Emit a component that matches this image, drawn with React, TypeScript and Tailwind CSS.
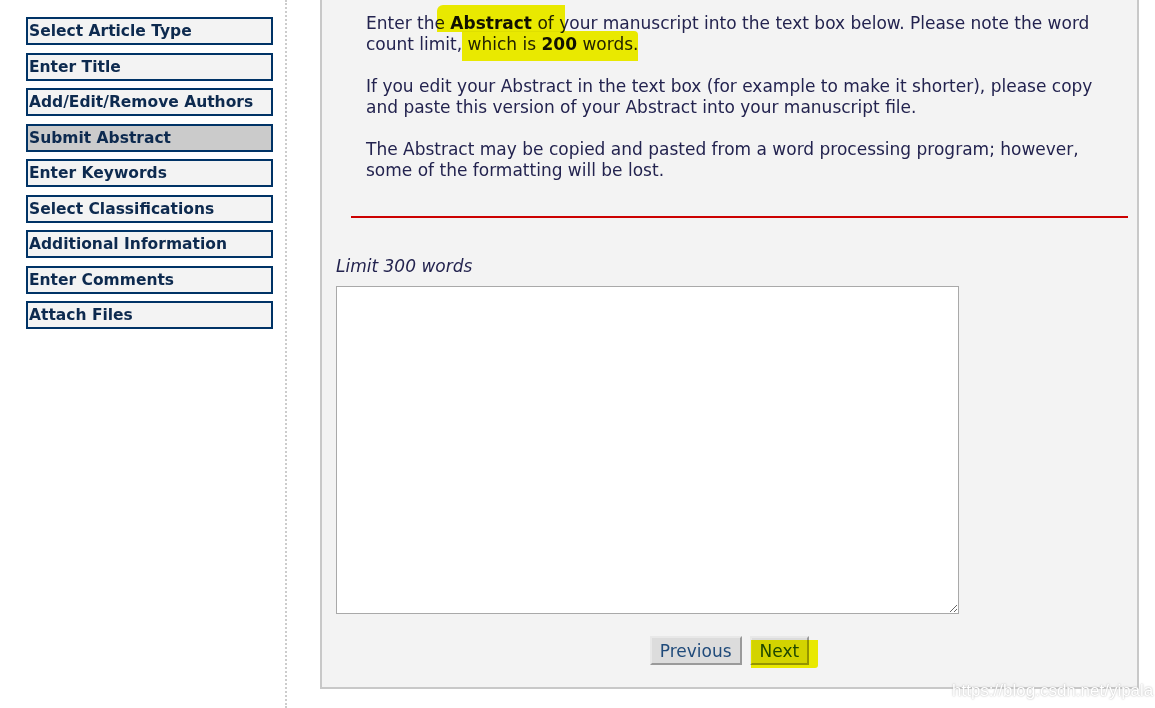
const navItems = [
  "Select Article Type",
  "Enter Title",
  "Add/Edit/Remove Authors",
  "Submit Abstract",
  "Enter Keywords",
  "Select Classifications",
  "Additional Information",
  "Enter Comments",
  "Attach Files",
];

const NavButton = ({ label, active }: { label: string; active: boolean }) => (
  <div
    className={`h-[28px] w-[247px] border-2 border-[#003366] pl-[1px] text-[15.5px] leading-[24px] font-bold text-[#0d2a4f] ${
      active ? "bg-[#cbcbcb]" : "bg-[#f3f3f3]"
    }`}
  >
    {label}
  </div>
);

const Highlight = ({ className }: { className: string }) => (
  <span className={`pointer-events-none absolute bg-[#f5f500] mix-blend-multiply ${className}`} />
);

export default function App() {
  return (
    <div
      className="relative flex h-[708px] w-[1155px] overflow-hidden bg-white"
      style={{ fontFamily: '"DejaVu Sans", Verdana, sans-serif' }}
    >
      {/* left nav */}
      <div className="h-full w-[285px] shrink-0 pt-[17px] pl-[26px]">
        <div className="flex flex-col gap-[7.5px]">
          {navItems.map((item) => (
            <NavButton key={item} label={item} active={item === "Submit Abstract"} />
          ))}
        </div>
      </div>
      <div className="h-full w-0 border-l-2 border-dotted border-[#cccccc]" />

      {/* main panel */}
      <div className="ml-[33px] h-[689px] w-[819px] shrink-0 border-r-2 border-b-2 border-l-2 border-[#c8c8c8] bg-[#f3f3f3]">
        <div className="pt-[13px] pl-[44px] pr-[30px] text-[17px] leading-[21px] text-[#23234f]">
          <p>
            Enter the <b className="text-[#111]">Abstract</b> of your manuscript into the text box below. Please note the word
            count limit, which is <b className="text-[#111]">200</b> words.
          </p>
          <p className="mt-[21px]">
            If you edit your Abstract in the text box (for example to make it shorter), please copy and paste this
            version of your Abstract into your manuscript file.
          </p>
          <p className="mt-[21px]">
            The Abstract may be copied and pasted from a word processing program; however, some of the formatting will
            be lost.
          </p>
        </div>

        <div className="mt-[35px] ml-[29px] mr-[9px] h-[2px] bg-[#cc0000]" />

        <div className="mt-[38px] pl-[14px] text-[17px] leading-[21px] italic text-[#23234f]">Limit 300 words</div>
        <div className="mt-[9px] pl-[14px]">
          <textarea className="block h-[328px] w-[623px] resize border border-[#a9a9a9] bg-white outline-none" />
        </div>

        <div className="mt-[22px] flex justify-center gap-[8px]">
          <button className="h-[29px] border-2 border-t-[#e8e8e8] border-l-[#e8e8e8] border-r-[#9a9a9a] border-b-[#9a9a9a] bg-[#dcdcdc] px-[8px] text-[17px] leading-[22px] text-[#1f4a7a]">
            Previous
          </button>
          <button className="h-[29px] border-2 border-t-[#e8e8e8] border-l-[#e8e8e8] border-r-[#9a9a9a] border-b-[#9a9a9a] bg-[#dcdcdc] px-[8px] text-[17px] leading-[22px] text-[#1f4a7a]">
            Next
          </button>
        </div>
      </div>

      {/* marker highlights */}
      <Highlight className="left-[437px] top-[5px] h-[27px] w-[128px] rounded-tl-[6px]" />
      <Highlight className="left-[462px] top-[31px] h-[30px] w-[176px] rounded-tr-[4px]" />
      <Highlight className="left-[751px] top-[640px] h-[28px] w-[67px] rounded-br-[3px]" />

      {/* watermark */}
      <div
        className="pointer-events-none absolute top-[678px] left-[952px] text-[17px] text-white"
        style={{ fontFamily: '"Liberation Sans", Arial, sans-serif', textShadow: "0 0 2px #a8a8a8" }}
      >
        https://blog.csdn.net/yipala
      </div>
    </div>
  );
}
